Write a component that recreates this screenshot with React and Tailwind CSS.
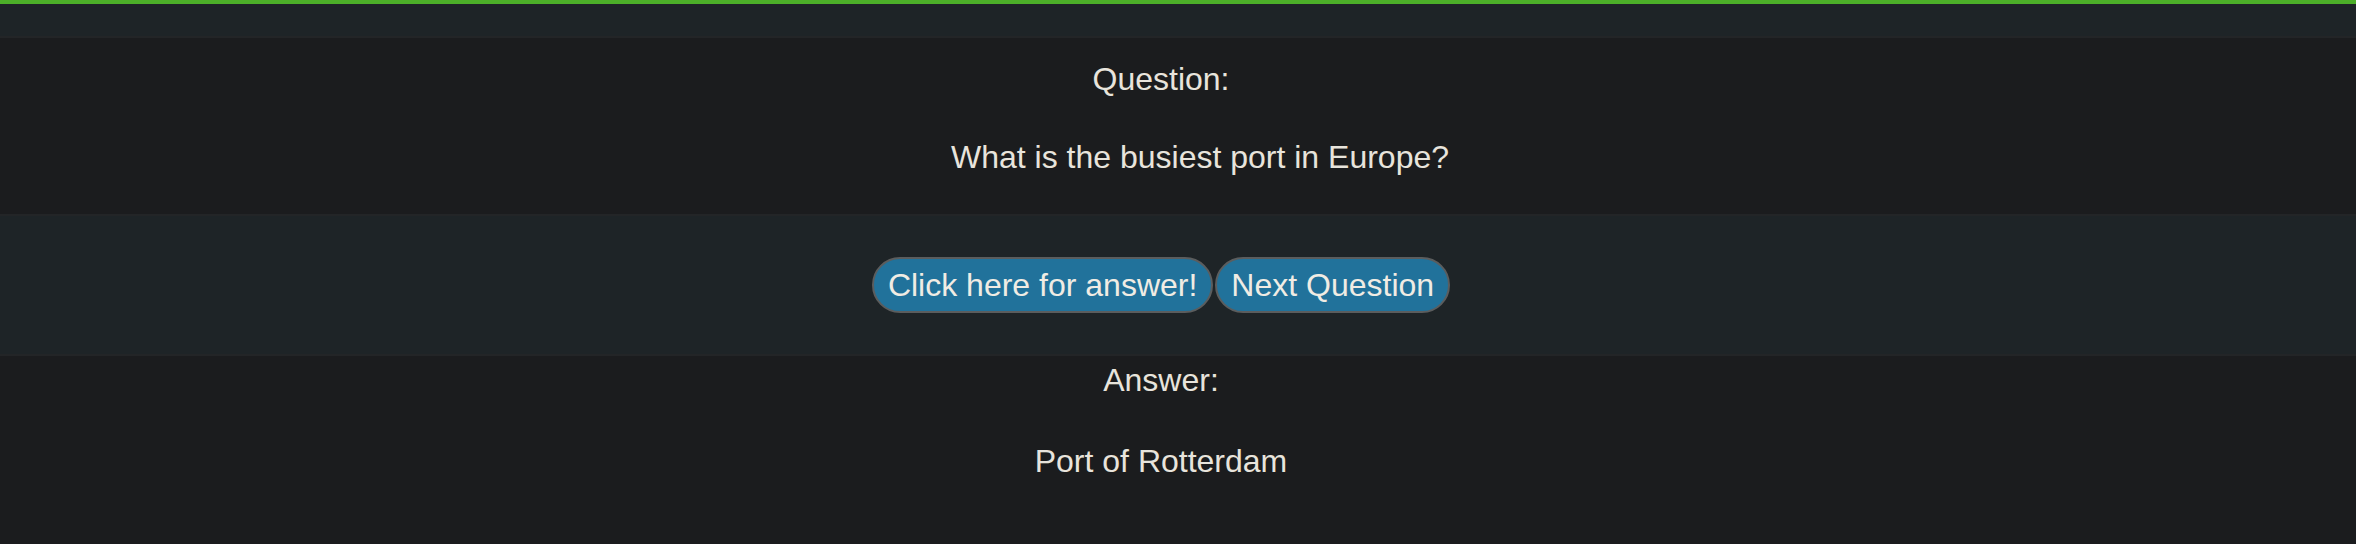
const QuizCard = () => {
  return (
    <div className="min-h-screen bg-[#1b1c1e] text-[#e8e4dc] font-['Liberation_Sans',Arial,sans-serif] text-[32px] leading-[40px]">
      <div className="h-[4px] bg-[#4caf29]" />
      <div className="h-[34px] bg-[#1e2427] border-b-2 border-[#232527]" />

      <div className="pt-[21px] pb-[37px] pr-[34px] text-center">
        <h2>Question:</h2>
        <p className="mt-[38px] pl-[78px]">What is the busiest port in Europe?</p>
      </div>

      <div className="bg-[#1e2427] border-y-2 border-[#232527] pt-[41px] pb-[41px] pr-[34px]">
        <div className="flex justify-center gap-[2px]">
          <button className="rounded-full bg-[#21729b] border-2 border-[#5b5d5e] px-[14px] pt-[6px] pb-[6px] text-[#f0ece4]">
            Click here for answer!
          </button>
          <button className="rounded-full bg-[#21729b] border-2 border-[#5b5d5e] px-[14px] pt-[6px] pb-[6px] text-[#f0ece4]">
            Next Question
          </button>
        </div>
      </div>

      <div className="pt-[4px] pr-[34px] text-center">
        <h2>Answer:</h2>
        <p className="mt-[41px]">Port of Rotterdam</p>
      </div>
    </div>
  )
}

export default function App() {
  return <QuizCard />
}
